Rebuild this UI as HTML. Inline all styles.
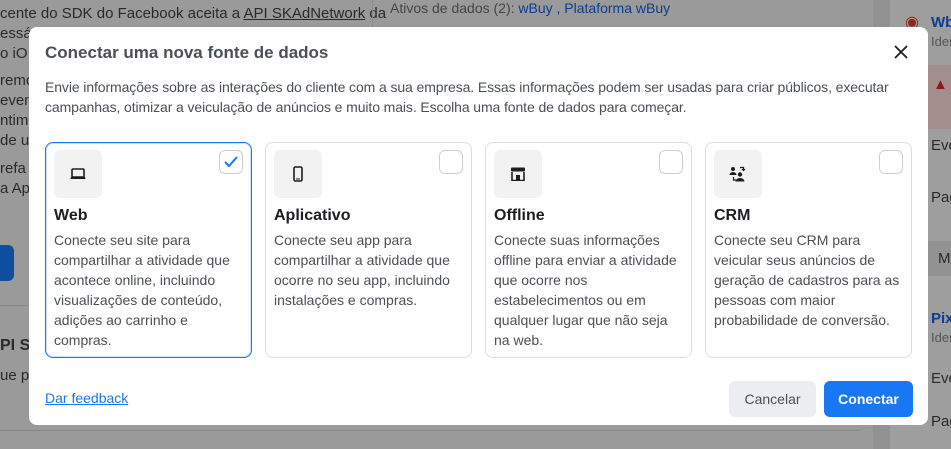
<!DOCTYPE html>
<html><head><meta charset="utf-8"><style>
*{box-sizing:border-box;margin:0;padding:0}
body{width:951px;height:449px;overflow:hidden;background:#9a9a9a;font-family:"Liberation Sans",Arial,sans-serif;position:relative;color:#1c1e21}
.bg{position:absolute;font-size:15px;color:#2a2a2a;white-space:nowrap}
.m{position:absolute;left:29px;top:27px;width:899px;height:398px;background:#fff;border-radius:8px}
.t{position:absolute;left:16px;top:16px;font-size:17px;font-weight:bold;color:#4b4f56}
.x{position:absolute;right:20px;top:18px}
.d{position:absolute;left:16px;top:50px;width:880px;font-size:14px;line-height:20px;color:#4b4f56;letter-spacing:-0.1px}
.c{position:absolute;top:115px;width:207px;height:216px;border:1px solid #dadde1;border-radius:8px}
.c.s{border:1px solid #1877f2;box-shadow:0 0 0 1px #cfe0fb inset}
.ib{position:absolute;left:8px;top:7px;width:48px;height:48px;background:#f2f2f2;border-radius:6px;display:flex;align-items:center;justify-content:center}
.cb{position:absolute;right:8px;top:7px;width:24px;height:24px;border:1px solid #ccd0d5;border-radius:6px;display:flex;align-items:center;justify-content:center}
.ct{position:absolute;left:8px;top:64px;font-size:16px;font-weight:bold;color:#1c1e21}
.cd{position:absolute;left:8px;top:87px;width:192px;font-size:14px;line-height:20px;color:#4b4f56}
.fb{position:absolute;left:16px;top:363px;font-size:14px;color:#1877f2;text-decoration:underline}
.btn{position:absolute;top:354px;height:36px;border-radius:6px;font-size:14px;display:flex;align-items:center;justify-content:center}
</style></head><body>
<div class="bg" style="left:0;top:5px">cente do SDK do Facebook aceita a <u>API SKAdNetwork</u> da</div>
<div class="bg" style="left:0;top:25px">essár</div>
<div class="bg" style="left:0;top:45px">o iO</div>
<div class="bg" style="left:0;top:72px">remo</div>
<div class="bg" style="left:0;top:92px">event</div>
<div class="bg" style="left:0;top:112px">ntime</div>
<div class="bg" style="left:0;top:132px">de um</div>
<div class="bg" style="left:0;top:160px">refa p</div>
<div class="bg" style="left:0;top:180px">a App</div>
<div style="position:absolute;left:0;top:245px;width:14px;height:36px;background:#0f4da0;border-radius:0 6px 6px 0"></div>
<div style="position:absolute;left:0;top:305px;width:29px;height:1px;background:#888"></div>
<div class="bg" style="left:0;top:337px;font-weight:bold;font-size:16px">PI SK</div>
<div class="bg" style="left:0;top:367px">ue pr</div>
<div style="position:absolute;left:0;top:430px;width:860px;height:1px;background:#888"></div>
<div style="position:absolute;left:372px;top:0;width:1px;height:27px;background:#8a8a8a"></div>
<div class="bg" style="left:390px;top:0;color:#444;font-size:14px">Ativos de dados (2): <span style="color:#0b3d91">wBuy , Plataforma wBuy</span></div>
<div style="position:absolute;left:873px;top:0;width:17px;height:449px;background:#929292"></div>
<div style="position:absolute;left:890px;top:0;width:61px;height:449px;background:#9e9e9e"></div>
<div style="position:absolute;left:928px;top:65px;width:23px;height:64px;background:#a38e8e"></div>
<div style="position:absolute;left:928px;top:241px;width:23px;height:35px;background:#929292"></div>
<div class="bg" style="left:905px;top:12px;color:#8b2a1a;font-size:16px">◉</div>
<div class="bg" style="left:931px;top:14px;color:#0b3d91;font-weight:bold">Wb</div>
<div class="bg" style="left:931px;top:34px;font-size:13px;color:#555">Iden</div>
<div class="bg" style="left:933px;top:76px;color:#8b1a1a">▲</div>
<div class="bg" style="left:931px;top:137px">Eve</div>
<div class="bg" style="left:931px;top:189px">Pag</div>
<div class="bg" style="left:938px;top:250px">M</div>
<div class="bg" style="left:931px;top:310px;color:#0b3d91;font-weight:bold">Pix</div>
<div class="bg" style="left:931px;top:330px;font-size:13px;color:#555">Iden</div>
<div class="bg" style="left:931px;top:370px">Eve</div>
<div class="bg" style="left:931px;top:413px">Pag</div>

<div class="m">
<div class="t">Conectar uma nova fonte de dados</div>
<svg class="x" width="14" height="14" viewBox="0 0 14 14"><path d="M1 1L13 13M13 1L1 13" stroke="#1c1e21" stroke-width="1.8"/></svg>
<div class="d">Envie informações sobre as interações do cliente com a sua empresa. Essas informações podem ser usadas para criar públicos, executar<br>campanhas, otimizar a veiculação de anúncios e muito mais. Escolha uma fonte de dados para começar.</div>

<div class="c s" style="left:16px">
<div class="ib"><svg width="16" height="14" viewBox="0 0 16 14"><rect x="2" y="2" width="12" height="8" rx="1" fill="none" stroke="#1c1e21" stroke-width="1.6"/><rect x="0.5" y="10" width="15" height="2" rx="1" fill="#1c1e21"/></svg></div>
<div class="cb"><svg width="14" height="12" viewBox="0 0 14 12"><path d="M1 6L5 10L13 1" fill="none" stroke="#1877f2" stroke-width="2"/></svg></div>
<div class="ct">Web</div>
<div class="cd">Conecte seu site para compartilhar a atividade que acontece online, incluindo visualizações de conteúdo, adições ao carrinho e compras.</div>
</div>
<div class="c" style="left:236px">
<div class="ib"><svg width="10" height="16" viewBox="0 0 10 16"><rect x="1" y="1" width="8" height="14" rx="1.5" fill="none" stroke="#1c1e21" stroke-width="1.6"/><rect x="3" y="12.5" width="4" height="1" fill="#1c1e21"/></svg></div>
<div class="cb"></div>
<div class="ct">Aplicativo</div>
<div class="cd">Conecte seu app para compartilhar a atividade que ocorre no seu app, incluindo instalações e compras.</div>
</div>
<div class="c" style="left:456px">
<div class="ib"><svg width="16" height="14" viewBox="0 0 16 14"><rect x="1" y="0.5" width="14" height="4" rx="1" fill="#1c1e21"/><path d="M2 5V13.5H14V5" fill="none" stroke="#1c1e21" stroke-width="1.6"/><rect x="6" y="8" width="4" height="5.5" fill="#1c1e21"/></svg></div>
<div class="cb"></div>
<div class="ct">Offline</div>
<div class="cd">Conecte suas informações offline para enviar a atividade que ocorre nos estabelecimentos ou em qualquer lugar que não seja na web.</div>
</div>
<div class="c" style="left:676px">
<div class="ib"><svg width="18" height="16" viewBox="0 0 18 16"><circle cx="4" cy="3" r="2" fill="#1c1e21"/><path d="M0.5 9a3.5 3 0 0 1 7 0z" fill="#1c1e21"/><circle cx="11" cy="8.5" r="2.2" fill="#1c1e21"/><path d="M6.5 15.5a4.5 3.5 0 0 1 9 0z" fill="#1c1e21"/><path d="M11 1.5h3.5v3M13 3l1.5 1.5L16 3" fill="none" stroke="#1c1e21" stroke-width="1.2"/><path d="M4.5 11v3h2.5" fill="none" stroke="#1c1e21" stroke-width="1.2"/></svg></div>
<div class="cb"></div>
<div class="ct">CRM</div>
<div class="cd">Conecte seu CRM para veicular seus anúncios de geração de cadastros para as pessoas com maior probabilidade de conversão.</div>
</div>

<div class="fb">Dar feedback</div>
<div class="btn" style="left:700px;width:87px;background:#ebedf0;color:#4b4f56">Cancelar</div>
<div class="btn" style="left:795px;width:89px;background:#1877f2;color:#fff;font-weight:bold">Conectar</div>
</div>
</body></html>
